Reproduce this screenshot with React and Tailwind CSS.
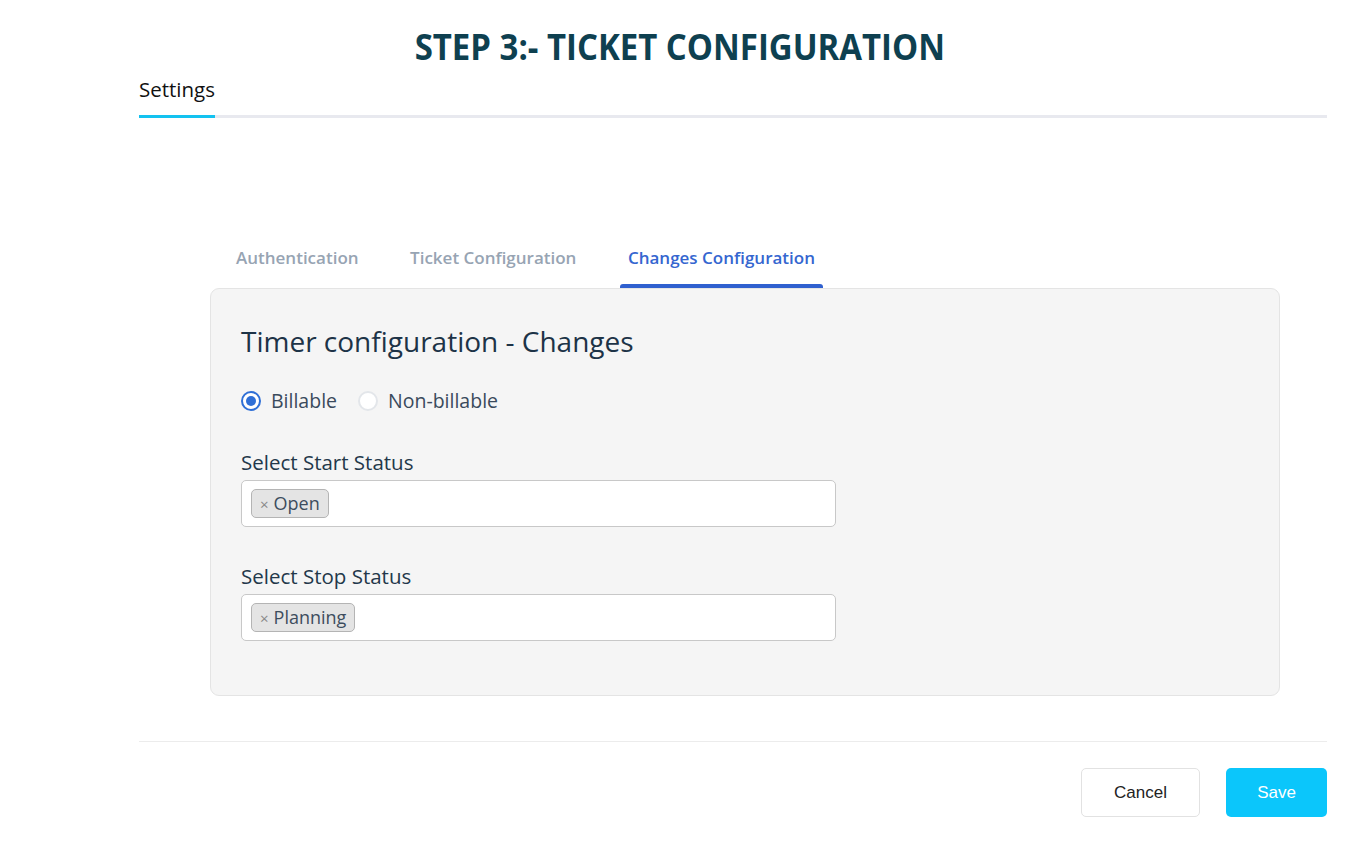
import { useState } from "react";

const Radio = ({ checked, label, onClick }) => (
  <label onClick={onClick} className="flex items-center gap-[10px] cursor-pointer">
    <span
      className={`flex h-[20px] w-[20px] items-center justify-center rounded-full border-2 bg-white ${
        checked ? "border-[#2f6fd6]" : "border-[#e3e6ea]"
      }`}
    >
      {checked && <span className="h-[10px] w-[10px] rounded-full bg-[#2f6fd6]" />}
    </span>
    <span className="text-[19.5px] text-[#3a4a5c]">{label}</span>
  </label>
);

const TagSelect = ({ label, value }) => (
  <div>
    <p className="text-[20.5px] font-medium text-[#23384a] leading-[26px]">{label}</p>
    <div className="mt-[5px] flex h-[47px] w-[595px] items-center rounded-[5px] border-[1.5px] border-[#c8c8c8] bg-white px-[9px]">
      <span className="flex h-[29px] items-center gap-[5px] rounded-[5px] border border-[#b4b4b4] bg-[#e4e4e4] px-[8px] text-[18px] text-[#3d4d5e]">
        <span className="text-[15px] text-[#888]">×</span>
        {value}
      </span>
    </div>
  </div>
);

export default function App() {
  const [billable, setBillable] = useState(true);
  const tabs = ["Authentication", "Ticket Configuration", "Changes Configuration"];
  const active = 2;

  return (
    <div className="min-h-[850px] bg-white" style={{ fontFamily: '"Open Sans", "Noto Sans", sans-serif' }}>
      <div className="pt-[26px] text-center">
        <h1 className="inline-block scale-x-[0.915] text-[36px] font-bold leading-[42px] text-[#0e4050]">
          STEP 3:- TICKET CONFIGURATION
        </h1>
      </div>

      <div className="ml-[139px] w-[1188px]">
        <div className="mt-[9px] flex border-b-[3px] border-[#e8e9ef]">
          <div className="-mb-[3px] border-b-[3px] border-[#13c2f0] pb-[14px] text-[20.5px] text-[#111] leading-[24px]">
            Settings
          </div>
        </div>

        <div className="ml-[71px] mt-[128px] w-[1070px]">
          <div className="flex pl-[18px] gap-[35.5px]">
            {tabs.map((t, i) => (
              <div
                key={t}
                className={`relative px-[8px] pb-[18px] text-[17px] font-semibold leading-[24px] ${
                  i === active ? "text-[#3566d0]" : "text-[#97a4b3]"
                }`}
              >
                {t}
                {i === active && (
                  <span className="absolute bottom-0 left-0 right-0 h-[4px] rounded-t-[3px] bg-[#2f60cf]" />
                )}
              </div>
            ))}
          </div>

          <div className="h-[408px] rounded-[9px] border border-[#e4e4e4] bg-[#f5f5f5] px-[30px] pt-[33px]">
            <h2 className="text-[28px] font-normal leading-[38px] text-[#1d3347]">Timer configuration - Changes</h2>

            <div className="mt-[26px] flex items-center gap-[21px]">
              <Radio checked={billable} label="Billable" onClick={() => setBillable(true)} />
              <Radio checked={!billable} label="Non-billable" onClick={() => setBillable(false)} />
            </div>

            <div className="mt-[34px] flex flex-col gap-[36px]">
              <TagSelect label="Select Start Status" value="Open" />
              <TagSelect label="Select Stop Status" value="Planning" />
            </div>
          </div>
        </div>

        <div className="mt-[45px] border-t border-[#ececec]" />

        <div className="mt-[26px] flex justify-end gap-[26px]" style={{ fontFamily: '"Liberation Sans", Arial, sans-serif' }}>
          <button className="h-[49px] w-[119px] rounded-[5px] border border-[#e2e2e2] bg-white text-[17px] text-[#222]">
            Cancel
          </button>
          <button className="h-[49px] w-[101px] rounded-[5px] bg-[#0bc6fb] text-[17px] text-white">Save</button>
        </div>
      </div>
    </div>
  );
}
